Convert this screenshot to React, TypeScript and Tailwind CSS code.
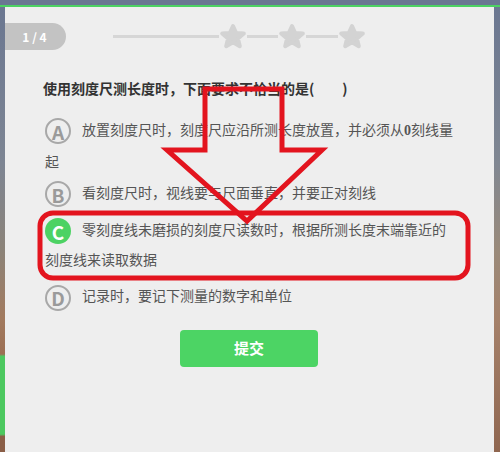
import React from "react";

const Star = () => (
  <svg width="28" height="27" viewBox="0 0 28 27" className="shrink-0">
    <path
      d="M14 3 L17.2 10 L24.8 10.6 L19 15.6 L20.8 23.2 L14 19.2 L7.2 23.2 L9 15.6 L3.2 10.6 L10.8 10 Z"
      fill="#d3d3d3"
      stroke="#d3d3d3"
      strokeWidth="4"
      strokeLinejoin="round"
    />
  </svg>
);

const Circle = ({ letter, active }: { letter: string; active?: boolean }) =>
  active ? (
    <span className="inline-flex w-[26px] h-[26px] rounded-full bg-[#4cd263] text-white font-bold text-[19px] items-center justify-center align-middle mr-[11px] leading-none">
      {letter}
    </span>
  ) : (
    <span className="inline-flex w-[26px] h-[26px] rounded-full border-2 border-[#a8a8a8] text-[#9a9a9a] font-bold text-[19px] items-center justify-center align-middle mr-[11px] leading-none">
      {letter}
    </span>
  );

export default function App() {
  return (
    <div
      className="relative w-[500px] h-[452px] overflow-hidden flex flex-col bg-[#eeeeee]"
      style={{ fontFamily: '"Noto Sans CJK SC", "Noto Sans", sans-serif' }}
    >
      <div className="h-[5px] bg-[#6a7792] shrink-0" />
      <div className="h-[2px] bg-[#4cd263] shrink-0" />
      <div className="flex flex-1">
        <div className="w-[5px] shrink-0 bg-[linear-gradient(to_bottom,#6b7791_0%,#7d8593_35%,#8c8378_55%,#a27a5e_70%,#9c6f53_78%,#4cc85f_78.5%,#4cc85f_96%,#8a5e47_96.5%,#8a5e47_100%)]" />
        <div className="flex-1 bg-[#eeeeee] flex flex-col">
          <div className="flex items-center mt-[16px] h-[27px]">
            <div className="w-[61px] h-[27px] bg-[#c3c3c3] rounded-r-full flex items-center justify-center text-white font-bold text-[12px] pr-[2px]">
              1 / 4
            </div>
            <div className="ml-[47px] flex items-center">
              <div className="w-[106px] h-[3px] bg-[#d6d6d6]" />
              <Star />
              <div className="w-[31px] h-[3px] bg-[#d6d6d6]" />
              <Star />
              <div className="w-[32px] h-[3px] bg-[#d6d6d6]" />
              <Star />
            </div>
          </div>
          <div className="mt-[27px] ml-[38px] text-[14px] font-bold text-[#333333] leading-[22px]">
            使用刻度尺测长度时，下面要求不恰当的是(<span className="inline-block w-[28px]" />)
          </div>
          <div className="ml-[40px] mr-[38px] text-[14px] text-[#555555] leading-[30px]">
            <div className="mt-[15px]">
              <Circle letter="A" />
              放置刻度尺时，刻度尺应沿所测长度放置，并必须从<span className="font-bold" style={{ fontFamily: '"Liberation Serif", serif' }}>0</span>刻线量起
            </div>
            <div className="mt-[1px]">
              <Circle letter="B" />
              看刻度尺时，视线要与尺面垂直，并要正对刻线
            </div>
            <div className="mt-[7px]">
              <Circle letter="C" active />
              零刻度线未磨损的刻度尺读数时，根据所测长度末端靠近的刻度线来读取数据
            </div>
            <div className="mt-[6px]">
              <Circle letter="D" />
              记录时，要记下测量的数字和单位
            </div>
          </div>
          <div className="mt-[19px] ml-[175px] w-[138px] h-[37px] rounded-[4px] bg-[#4cd464] flex items-center justify-center text-white font-bold text-[15px]">
            提交
          </div>
        </div>
        <div className="w-[6px] shrink-0 bg-[linear-gradient(to_bottom,#6b7791_0%,#808792_35%,#9a8a7a_55%,#a5816a_70%,#8f6650_100%)]" />
      </div>
      <svg className="absolute left-0 top-0 pointer-events-none" width="500" height="452">
        <path
          d="M205 89 L282 89 L282 150 L322 150 L247 221 L167 150 L205 150 Z"
          fill="none"
          stroke="#e3141e"
          strokeWidth="5"
          strokeLinejoin="miter"
        />
        <rect x="40" y="213" width="428" height="65" rx="13" fill="none" stroke="#e3141e" strokeWidth="5" />
      </svg>
    </div>
  );
}
